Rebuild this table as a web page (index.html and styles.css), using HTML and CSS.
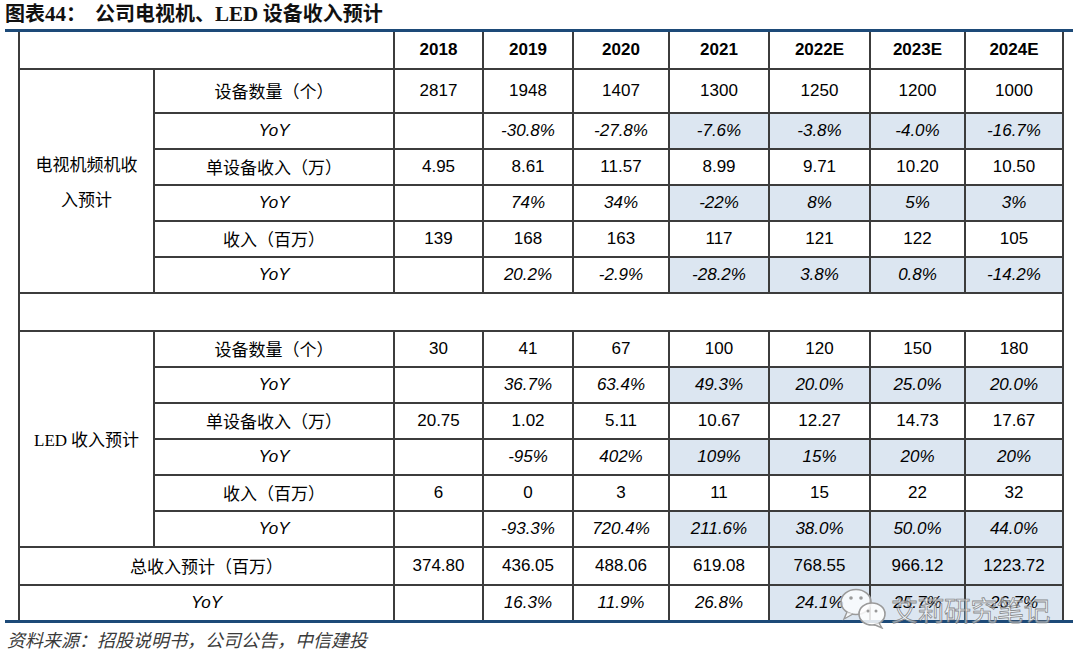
FILE: index.html
```html
<!DOCTYPE html>
<html lang="zh-CN">
<head>
<meta charset="utf-8">
<title>图表44</title>
<link rel="stylesheet" href="styles.css">
</head>
<body>
<div class="figure">
  <div class="title">图表<span class="serif">44</span>：&nbsp;&nbsp;公司电视机、<span class="serif">LED</span> 设备收入预计</div>
  <div class="rule"></div>
  <table class="data">
    <colgroup>
      <col class="c-group"><col class="c-label">
      <col class="c18"><col class="c19"><col class="c20"><col class="c21">
      <col class="c22"><col class="c23"><col class="c24">
    </colgroup>
    <tr class="head">
      <td colspan="2"></td>
      <th>2018</th><th>2019</th><th>2020</th><th>2021</th><th>2022E</th><th>2023E</th><th>2024E</th>
    </tr>
    <tr class="first">
      <td class="group" rowspan="6">电视机频机收<br>入预计</td>
      <td class="label">设备数量（个）</td>
      <td>2817</td><td>1948</td><td>1407</td><td>1300</td><td>1250</td><td>1200</td><td>1000</td>
    </tr>
    <tr class="yoy">
      <td class="label">YoY</td>
      <td></td><td>-30.8%</td><td>-27.8%</td><td class="sh">-7.6%</td><td class="sh">-3.8%</td><td class="sh">-4.0%</td><td class="sh">-16.7%</td>
    </tr>
    <tr>
      <td class="label">单设备收入（万）</td>
      <td>4.95</td><td>8.61</td><td>11.57</td><td>8.99</td><td>9.71</td><td>10.20</td><td>10.50</td>
    </tr>
    <tr class="yoy">
      <td class="label">YoY</td>
      <td></td><td>74%</td><td>34%</td><td class="sh">-22%</td><td class="sh">8%</td><td class="sh">5%</td><td class="sh">3%</td>
    </tr>
    <tr>
      <td class="label">收入（百万）</td>
      <td>139</td><td>168</td><td>163</td><td>117</td><td>121</td><td>122</td><td>105</td>
    </tr>
    <tr class="yoy">
      <td class="label">YoY</td>
      <td></td><td>20.2%</td><td>-2.9%</td><td class="sh">-28.2%</td><td class="sh">3.8%</td><td class="sh">0.8%</td><td class="sh">-14.2%</td>
    </tr>
    <tr class="blank">
      <td colspan="9"></td>
    </tr>
    <tr>
      <td class="group" rowspan="6"><span class="serif-n">LED</span> 收入预计</td>
      <td class="label">设备数量（个）</td>
      <td>30</td><td>41</td><td>67</td><td>100</td><td>120</td><td>150</td><td>180</td>
    </tr>
    <tr class="yoy">
      <td class="label">YoY</td>
      <td></td><td>36.7%</td><td>63.4%</td><td class="sh">49.3%</td><td class="sh">20.0%</td><td class="sh">25.0%</td><td class="sh">20.0%</td>
    </tr>
    <tr>
      <td class="label">单设备收入（万）</td>
      <td>20.75</td><td>1.02</td><td>5.11</td><td>10.67</td><td>12.27</td><td>14.73</td><td>17.67</td>
    </tr>
    <tr class="yoy">
      <td class="label">YoY</td>
      <td></td><td>-95%</td><td>402%</td><td class="sh">109%</td><td class="sh">15%</td><td class="sh">20%</td><td class="sh">20%</td>
    </tr>
    <tr>
      <td class="label">收入（百万）</td>
      <td>6</td><td>0</td><td>3</td><td>11</td><td>15</td><td>22</td><td>32</td>
    </tr>
    <tr class="yoy">
      <td class="label">YoY</td>
      <td></td><td>-93.3%</td><td>720.4%</td><td class="sh">211.6%</td><td class="sh">38.0%</td><td class="sh">50.0%</td><td class="sh">44.0%</td>
    </tr>
    <tr class="total">
      <td class="label" colspan="2">总收入预计（百万）</td>
      <td>374.80</td><td>436.05</td><td>488.06</td><td>619.08</td><td class="sh">768.55</td><td class="sh">966.12</td><td class="sh">1223.72</td>
    </tr>
    <tr class="yoy last">
      <td class="label" colspan="2">YoY</td>
      <td></td><td>16.3%</td><td>11.9%</td><td>26.8%</td><td class="sh">24.1%</td><td class="sh">25.7%</td><td class="sh">26.7%</td>
    </tr>
  </table>
  <div class="rule"></div>
  <div class="source">资料来源：招股说明书，公司公告，中信建投</div>
  <div class="watermark">
    <svg class="wm-icon" width="50" height="42" viewBox="0 0 50 42" aria-hidden="true">
      <ellipse cx="17" cy="15" rx="15" ry="12.5" fill="rgba(255,255,255,0.75)" stroke="#9a9a9a" stroke-width="1.6"/>
      <path d="M8 25 L5 32 L14 27" fill="rgba(255,255,255,0.75)" stroke="#9a9a9a" stroke-width="1.4"/>
      <circle cx="12" cy="11" r="1.8" fill="#9a9a9a"/>
      <circle cx="22" cy="11" r="1.8" fill="#9a9a9a"/>
      <ellipse cx="33" cy="27" rx="13" ry="11" fill="rgba(255,255,255,0.85)" stroke="#9a9a9a" stroke-width="1.6"/>
      <path d="M40 36 L43 41 L35 37.5" fill="rgba(255,255,255,0.85)" stroke="#9a9a9a" stroke-width="1.4"/>
      <circle cx="29" cy="24" r="1.5" fill="#9a9a9a"/>
      <circle cx="37" cy="24" r="1.5" fill="#9a9a9a"/>
    </svg>
    <span class="wm-text">艾莉研究笔记</span>
  </div>
</div>
</body>
</html>
```
FILE: styles.css
```css
html, body {
  margin: 0;
  padding: 0;
  background: #ffffff;
}

body {
  font-family: "Liberation Sans", Arial, "Noto Sans CJK SC", sans-serif;
  color: #000;
}

.figure {
  position: relative;
  margin-left: 5px;
  width: 1068px;
}

.title {
  height: 29px;
  line-height: 26px;
  font-family: "Noto Sans CJK SC", sans-serif;
  font-size: 20px;
  font-weight: 700;
  color: #111;
  white-space: nowrap;
}

.title .serif {
  font-family: "Liberation Serif", "Times New Roman", serif;
  font-size: 21px;
  font-weight: 700;
}

.rule {
  height: 3px;
  background: #1d4a78;
}

.data {
  border-collapse: collapse;
  table-layout: fixed;
  width: 1045px;
  margin-left: 13px;
  font-size: 17px;
}

.c-group { width: 135px; }
.c-label { width: 240px; }
.c18 { width: 89px; }
.c19 { width: 90px; }
.c20 { width: 96px; }
.c21 { width: 100px; }
.c22 { width: 101px; }
.c23 { width: 95px; }
.c24 { width: 98px; }

.data td,
.data th {
  border: 2px solid #3c3c3c;
  padding: 0;
  text-align: center;
  vertical-align: middle;
  height: 34px;
  line-height: 20px;
}

.data tr.head td,
.data tr.head th {
  border-top: none;
  height: 36px;
  font-weight: 700;
}

.data tr.first td {
  height: 42px;
}

.data tr.blank td {
  height: 36px;
}

.data tr.total td {
  height: 36px;
}

.data tr.last td {
  height: 34px;
  border-bottom: none;
}

.data .label {
  font-family: "Noto Sans CJK SC", sans-serif;
  font-size: 17px;
}

.data tr.yoy td {
  font-style: italic;
}

.data tr.yoy .label {
  font-family: "Liberation Sans", Arial, sans-serif;
}

.data .group {
  font-family: "Noto Sans CJK SC", sans-serif;
  font-size: 17px;
  line-height: 35px;
}

.data .group .serif-n {
  font-family: "Liberation Serif", "Times New Roman", serif;
}

.data .sh {
  background: #dce6f1;
}

.source {
  margin-top: 3px;
  padding-left: 2px;
  font-family: "Noto Sans CJK SC", sans-serif;
  font-size: 18px;
  line-height: 26px;
  font-style: italic;
  color: #3a3a3a;
  white-space: nowrap;
}

.watermark {
  position: absolute;
  left: 834px;
  top: 586px;
  display: flex;
  align-items: center;
  gap: 2px;
  pointer-events: none;
}

.wm-text {
  font-family: "Noto Sans CJK SC", sans-serif;
  font-size: 27px;
  color: rgba(255, 255, 255, 0.55);
  -webkit-text-stroke: 0.8px rgba(110, 110, 110, 0.8);
  letter-spacing: -0.5px;
  margin-top: 4px;
}
```
